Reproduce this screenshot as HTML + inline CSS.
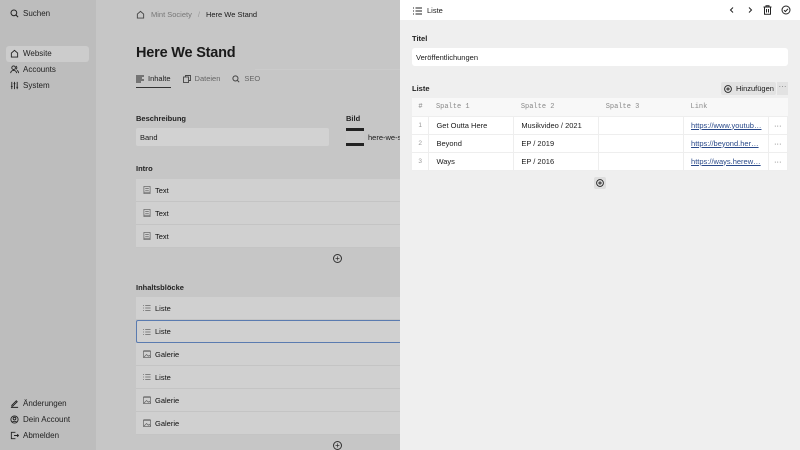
<!DOCTYPE html>
<html><head><meta charset="utf-8"><style>
*{box-sizing:border-box;margin:0;padding:0}
body{width:800px;height:450px;overflow:hidden;font-family:"Liberation Sans",sans-serif;font-size:8px;color:#1a1a1a;position:relative;background:#c6c6c6}
.abs{position:absolute}
.side{left:0;top:0;width:96px;height:450px;background:#bdbdbd}
.si{position:absolute;left:10px;display:flex;align-items:center;gap:4px;font-size:8px;color:#222}
.si svg{width:9px;height:9px}
.row{position:absolute;left:136px;width:270px;height:23px;background:#d0d0d0;border-bottom:1px solid #c4c4c4;display:flex;align-items:center;padding-left:7px;gap:4px;font-size:7.5px;color:#111}
.row svg{width:8px;height:8px}
.lbl{position:absolute;font-size:7.5px;font-weight:bold;color:#222}
.panel{left:400px;top:0;width:400px;height:450px;background:#efefef}
table{border-collapse:collapse;position:absolute;left:12px;top:98px;width:376px;background:#fff;font-size:7.5px}
td,th{height:18px;border-right:1px solid #eee;border-bottom:1px solid #eee;text-align:left;padding-left:7px;white-space:nowrap;overflow:hidden}
th{font-family:"Liberation Mono",monospace;font-weight:normal;color:#888;font-size:7px;background:#f8f8f8;border-right:none}
td.n{color:#999;font-size:6.5px;text-align:center;padding:0}
a{color:#2a4a8a;text-decoration:underline}
</style></head><body>
<div class="abs side"></div>
<div class="si" style="top:9px"><svg viewBox="0 0 10 10" fill="none" stroke="#222" stroke-width="1.1"><circle cx="4.3" cy="4.3" r="3.2"/><path d="M6.7 6.7L9 9"/></svg>Suchen</div>
<div class="abs" style="left:6px;top:46px;width:83px;height:16px;background:#cccccc;border-radius:3px"></div>
<div class="si" style="top:49px"><svg viewBox="0 0 10 10" fill="none" stroke="#222" stroke-width="1"><path d="M1.5 4.5L5 1.5 8.5 4.5V9H1.5Z"/></svg>Website</div>
<div class="si" style="top:65px"><svg viewBox="0 0 10 10" fill="none" stroke="#222" stroke-width="1"><circle cx="4" cy="3" r="2"/><path d="M0.8 9c0-2 1.5-3 3.2-3s3.2 1 3.2 3M6.5 1.2a2 2 0 010 3.6M7.8 6c1 .4 1.6 1.5 1.6 3"/></svg>Accounts</div>
<div class="si" style="top:81px"><svg viewBox="0 0 10 10" fill="none" stroke="#222" stroke-width="1"><path d="M2 1v8M5 1v8M8 1v8M1 6h2M4 3h2M7 7h2"/></svg>System</div>
<div class="si" style="top:399px"><svg viewBox="0 0 10 10" fill="none" stroke="#222" stroke-width="1"><path d="M2 7l5-5 1 1-5 5H2zM1 9.3h8"/></svg>Änderungen</div>
<div class="si" style="top:415px"><svg viewBox="0 0 10 10" fill="none" stroke="#222" stroke-width="1"><circle cx="5" cy="5" r="4"/><circle cx="5" cy="4" r="1.5"/><path d="M2.5 8c.8-1.3 4.2-1.3 5 0"/></svg>Dein Account</div>
<div class="si" style="top:431px"><svg viewBox="0 0 10 10" fill="none" stroke="#222" stroke-width="1"><path d="M6 1.5H1.5v7H6M4.5 5h5M8 3.5L9.5 5 8 6.5"/></svg>Abmelden</div>

<div class="abs" style="left:136px;top:10px;display:flex;gap:6px;align-items:center;font-size:7.5px"><svg width="9" height="9" viewBox="0 0 10 10" fill="none" stroke="#444" stroke-width="1"><path d="M1.5 4.5L5 1.5 8.5 4.5V9H1.5Z"/></svg><span style="color:#777">Mint Society</span><span style="color:#999">/</span><span>Here We Stand</span></div>
<div class="abs" style="left:136px;top:45px;font-size:14.5px;font-weight:bold;letter-spacing:-0.2px">Here We Stand</div>
<div class="abs" style="left:136px;top:74px;display:flex;gap:12px;font-size:7.5px;align-items:flex-start">
<span style="display:flex;gap:4px;align-items:center;border-bottom:1.5px solid #333;padding-bottom:4px"><svg width="8" height="8" viewBox="0 0 8 8" stroke="#222" stroke-width=".9"><path d="M0 1h8M0 3h6M0 5h8M0 7h5"/></svg>Inhalte</span>
<span style="display:flex;gap:4px;align-items:center;color:#666"><svg width="8" height="8" viewBox="0 0 8 8" fill="none" stroke="#444" stroke-width=".9"><rect x=".5" y="2" width="5" height="5.5"/><path d="M2.5 2V.5h5v5H5.5"/></svg>Dateien</span>
<span style="display:flex;gap:4px;align-items:center;color:#666"><svg width="8" height="8" viewBox="0 0 10 10" fill="none" stroke="#444" stroke-width="1.2"><circle cx="4.3" cy="4.3" r="3.2"/><path d="M6.7 6.7L9 9"/></svg>SEO</span></div>
<div class="abs" style="left:255px;top:69px;width:145px;height:1px;background:#cbcbcb"></div>
<div class="lbl" style="left:136px;top:114px">Beschreibung</div>
<div class="abs" style="left:136px;top:128px;width:193px;height:18px;background:#d2d2d2;border-radius:2px;padding:5px 4px;font-size:7.5px">Band</div>
<div class="lbl" style="left:346px;top:114px">Bild</div>
<div class="abs" style="left:346px;top:128px;width:18px;height:18px;background:#c8c8c8;border-top:3px solid #222;border-bottom:3px solid #222"></div>
<div class="abs" style="left:368px;top:133px;font-size:7.5px">here-we-s</div>
<div class="lbl" style="left:136px;top:164px">Intro</div>
<div class="row" style="top:179px"><svg viewBox="0 0 9 9" fill="none" stroke="#666" stroke-width=".8"><rect x="1" y=".5" width="7" height="8"/><path d="M2.5 3h4M2.5 5h4M1 7h7"/></svg>Text</div>
<div class="row" style="top:202px"><svg viewBox="0 0 9 9" fill="none" stroke="#666" stroke-width=".8"><rect x="1" y=".5" width="7" height="8"/><path d="M2.5 3h4M2.5 5h4M1 7h7"/></svg>Text</div>
<div class="row" style="top:225px"><svg viewBox="0 0 9 9" fill="none" stroke="#666" stroke-width=".8"><rect x="1" y=".5" width="7" height="8"/><path d="M2.5 3h4M2.5 5h4M1 7h7"/></svg>Text</div>
<div class="abs" style="left:333px;top:254px;width:9px;height:9px;border:1px solid #333;border-radius:50%;font-size:8px;line-height:7px;text-align:center">+</div>
<div class="lbl" style="left:136px;top:283px">Inhaltsblöcke</div>
<div class="row" style="top:297px"><svg viewBox="0 0 9 9" stroke="#666" stroke-width=".8"><path d="M0 1.5h1M0 4.5h1M0 7.5h1M2.5 1.5h6M2.5 4.5h6M2.5 7.5h6"/></svg>Liste</div>
<div class="row" style="top:320px;border:1px solid #5a7bb0;border-radius:2px;padding-left:6px"><svg viewBox="0 0 9 9" stroke="#666" stroke-width=".8"><path d="M0 1.5h1M0 4.5h1M0 7.5h1M2.5 1.5h6M2.5 4.5h6M2.5 7.5h6"/></svg>Liste</div>
<div class="row" style="top:343px"><svg viewBox="0 0 9 9" fill="none" stroke="#666" stroke-width=".8"><rect x=".5" y="1.5" width="8" height="7"/><path d="M.5 .5h8M1 8l3-3 2 2 1-1 1.5 1.5"/></svg>Galerie</div>
<div class="row" style="top:366px"><svg viewBox="0 0 9 9" stroke="#666" stroke-width=".8"><path d="M0 1.5h1M0 4.5h1M0 7.5h1M2.5 1.5h6M2.5 4.5h6M2.5 7.5h6"/></svg>Liste</div>
<div class="row" style="top:389px"><svg viewBox="0 0 9 9" fill="none" stroke="#666" stroke-width=".8"><rect x=".5" y="1.5" width="8" height="7"/><path d="M.5 .5h8M1 8l3-3 2 2 1-1 1.5 1.5"/></svg>Galerie</div>
<div class="row" style="top:412px"><svg viewBox="0 0 9 9" fill="none" stroke="#666" stroke-width=".8"><rect x=".5" y="1.5" width="8" height="7"/><path d="M.5 .5h8M1 8l3-3 2 2 1-1 1.5 1.5"/></svg>Galerie</div>
<div class="abs" style="left:333px;top:441px;width:9px;height:9px;border:1px solid #333;border-radius:50%;font-size:8px;line-height:7px;text-align:center">+</div>

<div class="abs panel">
<div class="abs" style="left:0;top:0;width:400px;height:20px;background:#fff"></div>
<div class="abs" style="left:13px;top:6px;display:flex;gap:5px;align-items:center;font-size:7.5px"><svg width="9" height="8" viewBox="0 0 9 8" stroke="#222" stroke-width=".9"><path d="M0 1h1M0 4h1M0 7h1M2.5 1h6.5M2.5 4h6.5M2.5 7h6.5"/></svg>Liste</div>
<svg class="abs" style="left:328px;top:6px" width="8" height="8" viewBox="0 0 8 8" fill="none" stroke="#222" stroke-width="1"><path d="M5 1.5L2.5 4 5 6.5"/></svg>
<svg class="abs" style="left:346px;top:6px" width="8" height="8" viewBox="0 0 8 8" fill="none" stroke="#222" stroke-width="1"><path d="M3 1.5L5.5 4 3 6.5"/></svg>
<svg class="abs" style="left:363px;top:5px" width="9" height="10" viewBox="0 0 9 10" fill="none" stroke="#222" stroke-width="1"><path d="M.5 2h8M3 2V.7h3V2M1.5 2v7.3h6V2M3.5 4v3.5M5.5 4v3.5"/></svg>
<svg class="abs" style="left:381px;top:5px" width="10" height="10" viewBox="0 0 10 10" fill="none" stroke="#222" stroke-width="1"><circle cx="5" cy="5" r="4"/><path d="M3 5.2l1.4 1.3L7 3.8"/></svg>
<div class="lbl" style="left:12px;top:34px">Titel</div>
<div class="abs" style="left:12px;top:48px;width:376px;height:18px;background:#fff;border-radius:3px;padding:5px 4px;font-size:7.5px">Veröffentlichungen</div>
<div class="lbl" style="left:12px;top:84px">Liste</div>
<div class="abs" style="left:321px;top:82px;width:55px;height:13px;background:#e2e2e2;border-radius:2px;display:flex;align-items:center;gap:4px;padding-left:3px;font-size:7.5px"><svg width="8" height="8" viewBox="0 0 8 8" fill="none" stroke="#222" stroke-width=".9"><circle cx="4" cy="4" r="3.4"/><path d="M4 2.2v3.6M2.2 4h3.6"/></svg>Hinzufügen</div>
<div class="abs" style="left:377px;top:82px;width:11px;height:13px;background:#e2e2e2;font-size:8px;color:#777;text-align:center;line-height:9px">···</div>
<table>
<tr><th style="width:17px;padding:0;text-align:center">#</th><th style="width:85px">Spalte 1</th><th style="width:85px">Spalte 2</th><th style="width:85px">Spalte 3</th><th style="width:85px">Link</th><th style="width:19px"></th></tr>
<tr><td class="n">1</td><td>Get Outta Here</td><td>Musikvideo / 2021</td><td></td><td><a>https://www.youtub…</a></td><td style="color:#555;padding-left:5px">···</td></tr>
<tr><td class="n">2</td><td>Beyond</td><td>EP / 2019</td><td></td><td><a>https://beyond.her…</a></td><td style="color:#555;padding-left:5px">···</td></tr>
<tr><td class="n">3</td><td>Ways</td><td>EP / 2016</td><td></td><td><a>https://ways.herew…</a></td><td style="color:#555;padding-left:5px">···</td></tr>
</table>
<div class="abs" style="left:194px;top:177px;width:12px;height:12px;background:#dedede;border-radius:2px"></div>
<svg class="abs" style="left:196px;top:179px" width="8" height="8" viewBox="0 0 8 8" fill="none" stroke="#222" stroke-width=".9"><circle cx="4" cy="4" r="3.4"/><path d="M4 2.2v3.6M2.2 4h3.6"/></svg>
</div>
</body></html>
